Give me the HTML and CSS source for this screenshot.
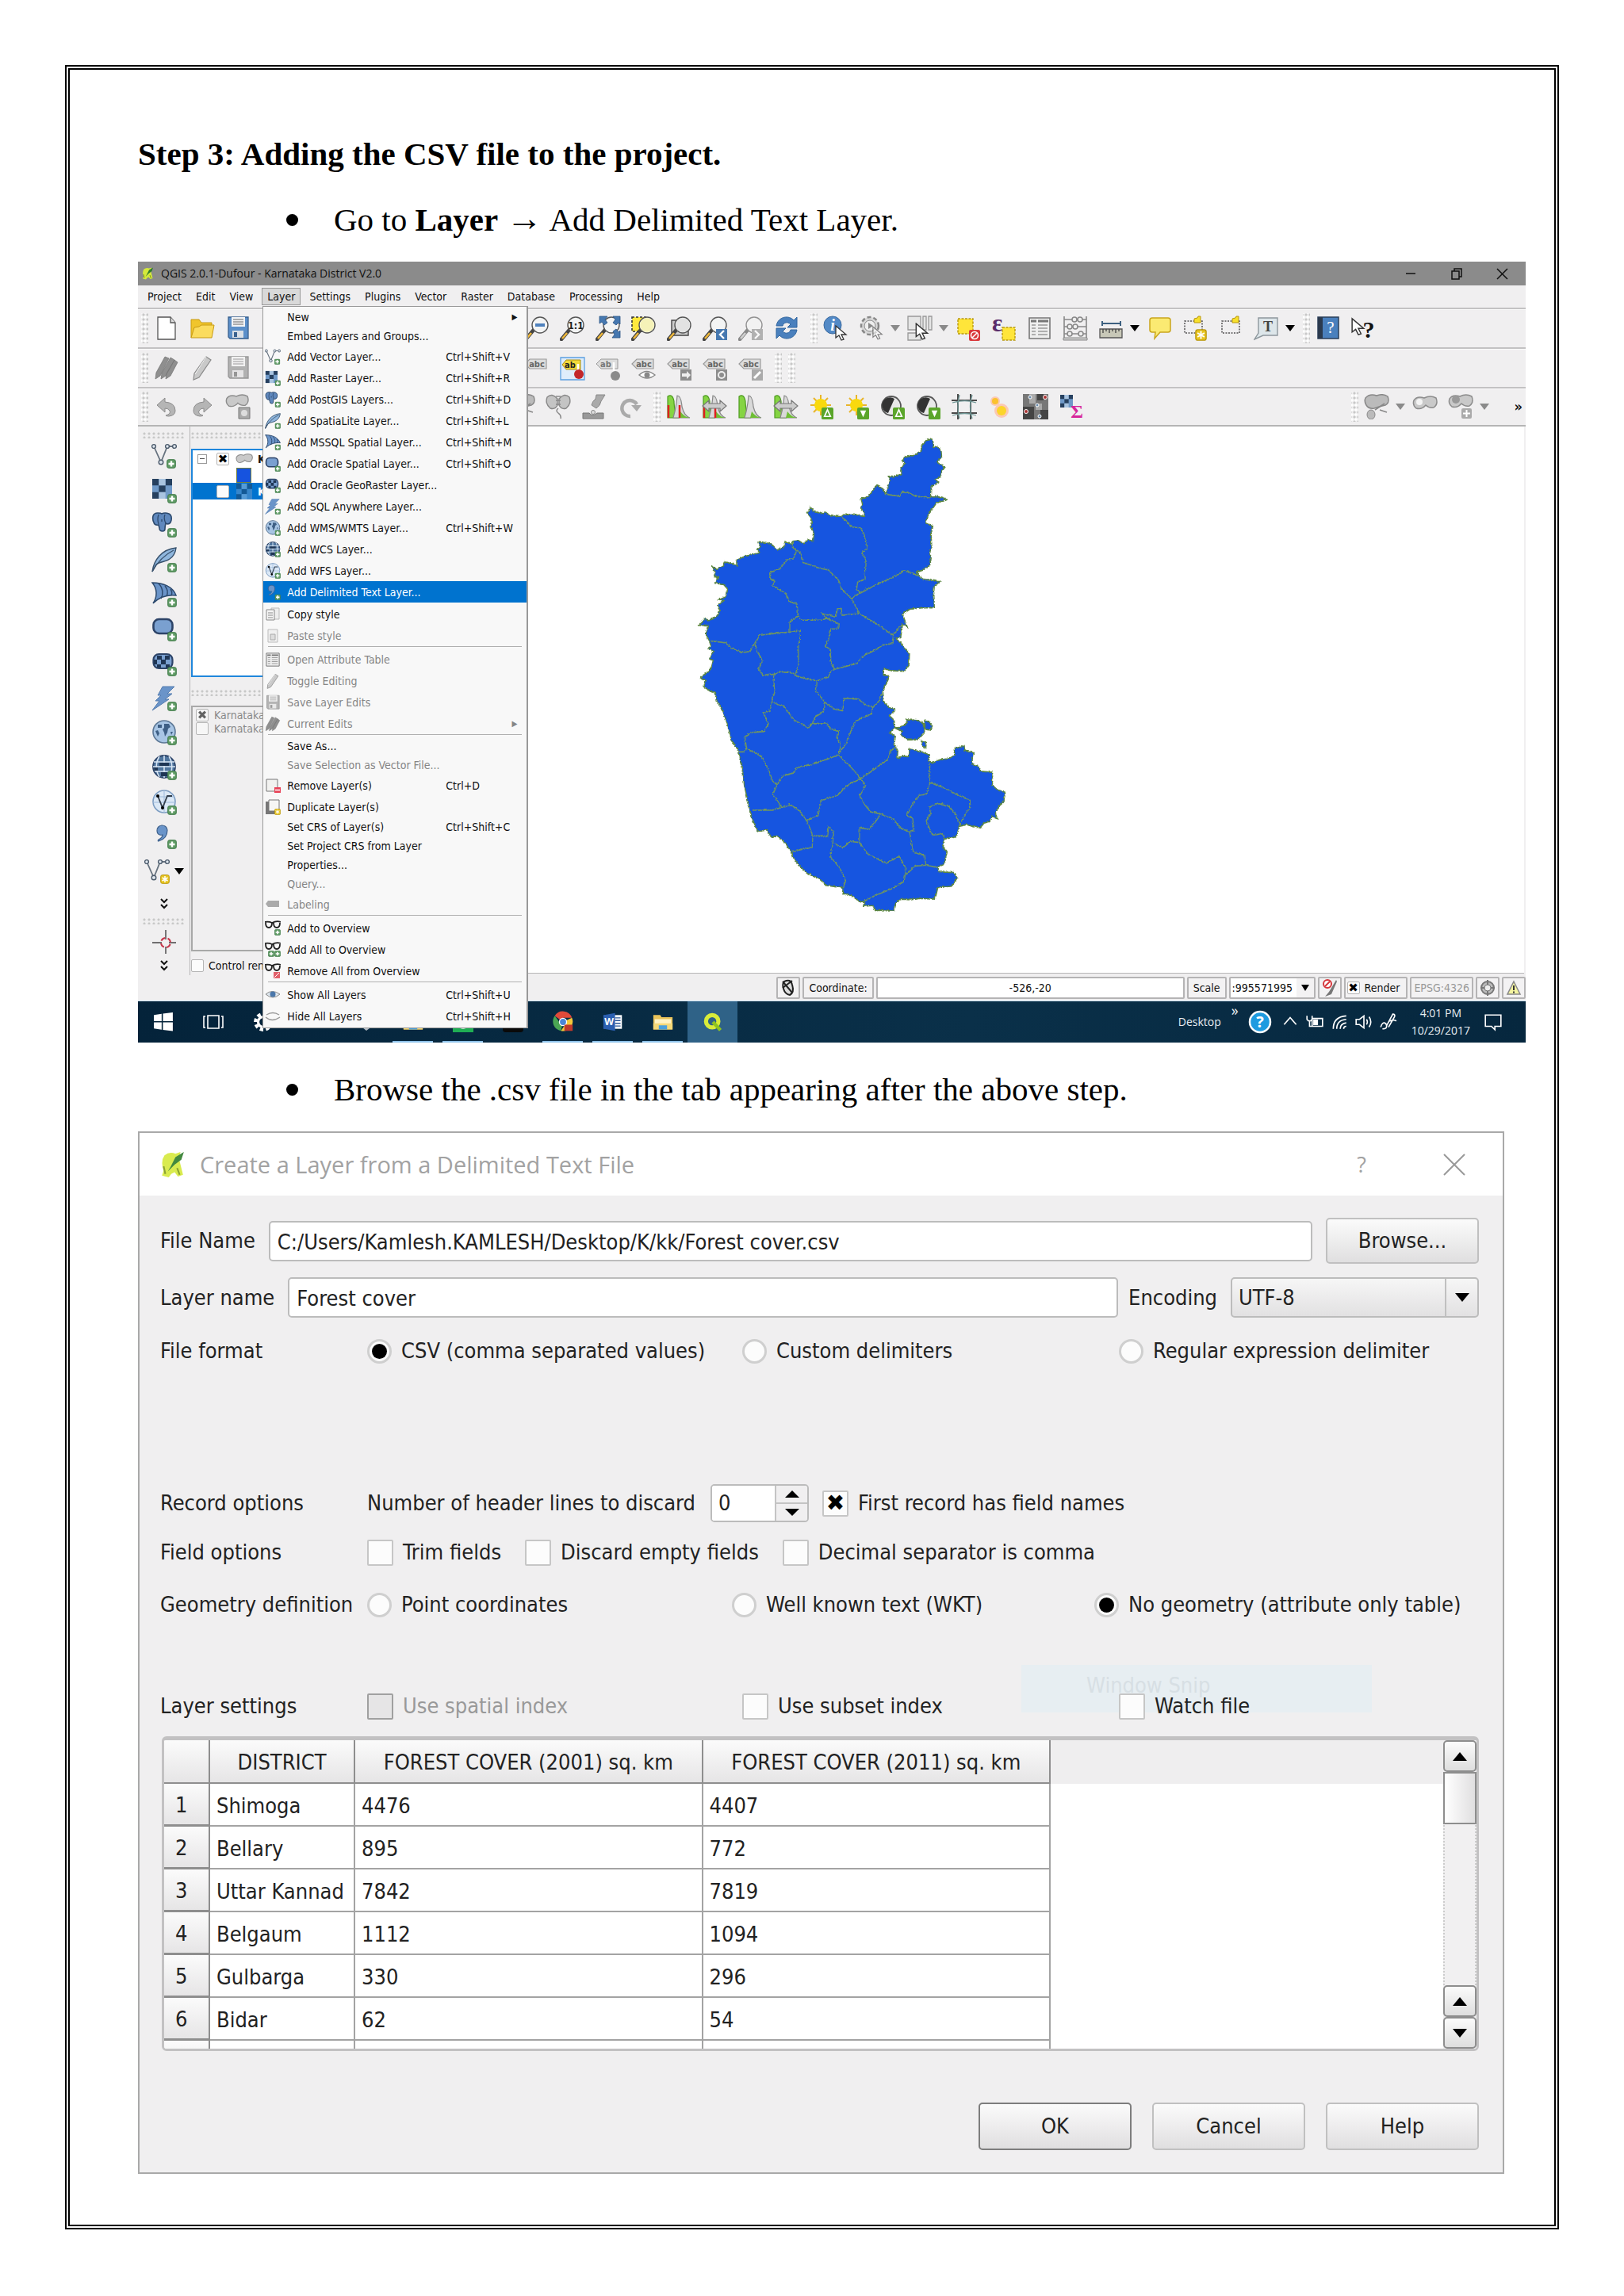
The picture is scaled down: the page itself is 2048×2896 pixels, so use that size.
FILE: index.html
```html
<!DOCTYPE html>
<html lang="en">
<head>
<meta charset="utf-8">
<title>Step 3: Adding the CSV file to the project</title>
<link rel="stylesheet" href="styles.css">
</head>
<body>
<svg class="sprite" aria-hidden="true">
  <defs>
    <symbol id="plus" viewBox="0 0 12 12"><rect x=".7" y=".7" width="10.600" height="10.600" rx="2" fill="#5f9b65" stroke="#3f7a48"/><path d="M6 2.500v7M2.500 6h7" stroke="#fff" stroke-width="2.400"/></symbol>
    <symbol id="star" viewBox="0 0 12 12"><rect x=".7" y=".7" width="10.600" height="10.600" rx="2" fill="#e8c51f" stroke="#b8960c"/><path d="M6 2v8M2.500 4l7 4M9.500 4l-7 4" stroke="#fff" stroke-width="1.500"/></symbol>
    <symbol id="vee" viewBox="0 0 32 32"><path d="M3 4l9 20 8-20h9" fill="none" stroke="#66727f" stroke-width="1.800"/><g fill="#dfe6ee" stroke="#4b5a6b" stroke-width="1.400"><circle cx="3" cy="4" r="2.400"/><circle cx="20" cy="4" r="2.400"/><circle cx="29" cy="4" r="2.400"/><circle cx="12" cy="24" r="2.800"/></g></symbol>
    <symbol id="checker" viewBox="0 0 24 24"><path fill="#6f99c8" d="M0 0h24v24H0z"/><path fill="#26405f" d="M0 0h8v8H0zM16 0h8v8h-8zM8 8h8v8H8zM0 16h8v8H0z"/><path fill="#a9c4e0" d="M8 0h8v8H8zM8 16h8v8H8z"/></symbol>
    <symbol id="l-vector" viewBox="0 0 32 32"><use href="#vee" width="32" height="32"/><use href="#plus" x="19" y="20" width="12" height="12"/></symbol>
    <symbol id="l-newvec" viewBox="0 0 32 32"><use href="#vee" width="32" height="32"/><use href="#star" x="20" y="20" width="12" height="12"/></symbol>
    <symbol id="l-raster" viewBox="0 0 32 32"><use href="#checker" x="1" y="1" width="25" height="25"/><use href="#plus" x="20" y="20" width="12" height="12"/></symbol>
    <symbol id="l-pg" viewBox="0 0 32 32"><path d="M2 5q1-4 6-4 4 0 5 1 4-2 9 0 4 2 3 8-1 5-5 5l-2-1q-1 4-1 7 0 3-3 3-4 0-4-4l-1-4q-5 1-6-3-2-4-1-8z" fill="#5f88bd" stroke="#2d4a6e" stroke-width="1.600"/><path d="M9 3q-2 6 0 12M17 3q-2 5 1 11M13 9v3" fill="none" stroke="#2d4a6e" stroke-width="1.300"/><use href="#plus" x="20" y="20" width="12" height="12"/></symbol>
    <symbol id="l-lite" viewBox="0 0 32 32"><path d="M1 31C3 17 12 3 31 1c-1 8-5 12-8 14-5 4-12 3-17 7z" fill="#8fb6dd" stroke="#37506b" stroke-width="1.400"/><path d="M1 31C8 18 16 10 28 4" fill="none" stroke="#37506b" stroke-width="1.300"/><use href="#plus" x="20" y="20" width="12" height="12"/></symbol>
    <symbol id="l-ms" viewBox="0 0 32 32"><path d="M1 1c14 0 26 5 30 16-9-1-20 1-29 10C8 18 7 8 1 1z" fill="#6a94c9" stroke="#2d4a6e" stroke-width="1.500"/><path d="M9 2c6 6 6 14 3 19M17 5c4 5 4 9 2 13M24 9c2 3 2 6 1 8" fill="none" stroke="#2d4a6e" stroke-width="1.500"/><use href="#plus" x="20" y="20" width="12" height="12"/></symbol>
    <symbol id="l-ora" viewBox="0 0 32 32"><rect x="2.500" y="4" width="24" height="18" rx="7" fill="#7aa0d0" stroke="#2d4468" stroke-width="2.600"/><use href="#plus" x="20" y="20" width="12" height="12"/></symbol>
    <symbol id="l-geo" viewBox="0 0 32 32"><rect x="2.500" y="4" width="24" height="18" rx="7" fill="#7aa0d0" stroke="#2d4468" stroke-width="2.200"/><path fill="#1f3655" d="M7 6h6v5H7zM17 6h6v5h-6zM12 11h6v6h-6zM3 11h4v6H3zM7 17h5v4H7zM18 17h5v4h-5z"/><use href="#plus" x="20" y="20" width="12" height="12"/></symbol>
    <symbol id="l-bolt" viewBox="0 0 32 32"><path d="M14 1h15l-9 9h6l-9 7h5L1 31l9-12H5l7-7H8z" fill="#6a94c9" stroke="#557db0"/><use href="#plus" x="20" y="20" width="12" height="12"/></symbol>
    <symbol id="l-wms" viewBox="0 0 32 32"><circle cx="16" cy="15" r="14" fill="#a8c5e4" stroke="#5d7896" stroke-width="1.600"/><path d="M8 6h5v4H8zM16 5h6l2 4-3 2-1 5-3 5-1-5-2-4 2-2zM5 14l3-1 2 4-2 4zM24 15h3l-2 4z" fill="#3e5f85"/><use href="#plus" x="20" y="20" width="12" height="12"/></symbol>
    <symbol id="l-wcs" viewBox="0 0 32 32"><circle cx="16" cy="15" r="14" fill="#4f759e" stroke="#2d4468" stroke-width="1.800"/><path d="M3 9h26M2 15h28M4 21h24M16 1v28M10 2c-5 8-5 18 0 26M22 2c5 8 5 18 0 26" fill="none" stroke="#d6e4f3" stroke-width="1.600"/><path fill="#1f3655" d="M10 10h12v4H10zM3 16h5v4H4zM12 22h8v5h-8z"/><use href="#plus" x="20" y="20" width="12" height="12"/></symbol>
    <symbol id="l-wfs" viewBox="0 0 32 32"><circle cx="16" cy="15" r="14" fill="#dbe8f6" stroke="#7d9dc2" stroke-width="1.600"/><path d="M3 9h26M2 16h28M16 1v28" stroke="#9fbbdc" fill="none"/><path d="M8 8l6 15 6-15h6" fill="none" stroke="#333f4d" stroke-width="1.800"/><circle cx="8" cy="8" r="2"/><circle cx="14" cy="23" r="2"/><use href="#plus" x="20" y="20" width="12" height="12"/></symbol>
    <symbol id="l-comma" viewBox="0 0 32 32"><path d="M7 9a6.500 6.500 0 1 1 13-1c0 7-4 12-11 14-1 0-1-1 0-2 4-2 5-4 5-6-4 1-7-1-7-5z" fill="#6a94c9" stroke="#3d5f8a" stroke-width="1.200"/><use href="#plus" x="20" y="20" width="12" height="12"/></symbol>
    <symbol id="cross" viewBox="0 0 32 32"><path d="M18 1v12M18 22v9M1 17h12M22 17h9" stroke="#444" stroke-width="1.400"/><circle cx="18" cy="17" r="6" fill="none" stroke="#c8354a" stroke-width="2" stroke-dasharray="6 3.400" stroke-dashoffset="-2"/></symbol>

    <symbol id="t-new" viewBox="0 0 32 32"><path d="M5 2h16l6 7v21H5z" fill="#fff" stroke="#555" stroke-width="1.300"/><path d="M21 2v7h6" fill="#ddd" stroke="#555" stroke-width="1.300"/></symbol>
    <symbol id="t-open" viewBox="0 0 32 32"><path d="M2 28V5h10l3 4h13v5" fill="#f0c52c" stroke="#c79a12"/><path d="M2 28L6 15l6-1 3-2h16l-3 16z" fill="#fbdc5e" stroke="#c79a12"/></symbol>
    <symbol id="t-save" viewBox="0 0 32 32"><path d="M4 2h25v27H6l-2-2z" fill="#5b8fc9" stroke="#39618f" stroke-width="1.300"/><path d="M8 2h17v12H8z" fill="#f1f3f5"/><path d="M10 5h13M10 8h13M10 11h13" stroke="#666" stroke-width="1.200"/><path d="M9 19h14v9H9z" fill="#d9dfe6"/><path d="M11 21h4v6h-4z" fill="#39618f"/></symbol>
    <symbol id="t-pencils" viewBox="0 0 32 32"><path d="M14 2l5 2L8 26l-6 4 1-8zM21 3l5 3-11 20-6 4 1-7zM26 6l4 3-9 17-6 4 1-7z" fill="#8f8f8f" stroke="#777" stroke-width=".8"/></symbol>
    <symbol id="t-pencil" viewBox="0 0 32 32"><path d="M21 2l6 4-15 22-7 3 1-8z" fill="#c9c9c9" stroke="#8b8b8b" stroke-width="1.200"/><path d="M21 2L7 24" stroke="#f5f5f5"/></symbol>
    <symbol id="t-mag" viewBox="0 0 32 32"><path d="M2 30l10-12" stroke="#444" stroke-width="4.500" stroke-linecap="round"/><path d="M3 29l6-7" stroke="#f0b93a" stroke-width="2.500"/><circle cx="20" cy="12" r="10" fill="#f3f4f4" stroke="#555" stroke-width="1.400"/></symbol>
    <symbol id="t-out" viewBox="0 0 32 32"><use href="#t-mag" width="32" height="32"/><path d="M14 10h12v4H14z" fill="#4f81bd"/></symbol>
    <symbol id="t-one" viewBox="0 0 32 32"><use href="#t-mag" width="32" height="32"/><text x="20" y="17" font-size="12" font-weight="700" text-anchor="middle" fill="#222">1:1</text></symbol>
    <symbol id="t-full" viewBox="0 0 32 32"><use href="#t-mag" width="32" height="32"/><path d="M5 1h10l-3 4 3 4-4 3-3-4-3 2zM31 1H22l3 4-3 4 4 3 3-3 2 2zM31 28H21l3-4-2-4 4-3 3 4 2-2z" fill="#4678b0" stroke="#2c5585" stroke-width=".8"/></symbol>
    <symbol id="t-sel" viewBox="0 0 32 32"><path d="M1 2h18v18H1z" fill="#ffe93e" stroke="#333" stroke-width="1.600" stroke-dasharray="3 2"/><use href="#t-mag" width="32" height="32"/><circle cx="20" cy="12" r="9" fill="#f5f2b8"/></symbol>
    <symbol id="t-lay" viewBox="0 0 32 32"><path d="M6 6h21v19H6z" fill="#ccc" stroke="#444" stroke-width="1.400"/><use href="#t-mag" width="32" height="32"/><circle cx="20" cy="12" r="9" fill="#e2e2e2"/></symbol>
    <symbol id="t-last" viewBox="0 0 32 32"><use href="#t-mag" width="32" height="32"/><path d="M17 17h14v14H17z" fill="#4678b0"/><path d="M27 19l-5 5 5 5" fill="none" stroke="#fff" stroke-width="2.400"/></symbol>
    <symbol id="t-next" viewBox="0 0 32 32"><use href="#t-mag" width="32" height="32"/><path d="M17 17h14v14H17z" fill="#888"/><path d="M21 19l5 5-5 5" fill="none" stroke="#fff" stroke-width="2.400"/></symbol>
    <symbol id="t-ref" viewBox="0 0 32 32"><path d="M3 13C5 1 19-1 25 6l4-4v13H17l4-4c-4-4-9-2-10 2zM29 18c-2 12-16 14-22 7l-4 4V16h12l-4 4c4 4 9 2 10-2z" fill="#4a80bd" stroke="#2f659f"/></symbol>
    <symbol id="arrow" viewBox="0 0 16 20"><path d="M1 1v15l4-3 3 6 3-1-3-6h6z" fill="#fff" stroke="#333" stroke-width="1.300"/></symbol>
    <symbol id="t-info" viewBox="0 0 32 32"><circle cx="12" cy="12" r="11" fill="#5289c6" stroke="#3b6a9f"/><text x="12" y="19" font-family="Liberation Serif" font-style="italic" font-weight="700" font-size="20" text-anchor="middle" fill="#fff">i</text><use href="#arrow" x="15" y="12" width="16" height="20"/></symbol>
    <symbol id="t-gear" viewBox="0 0 32 32"><circle cx="14" cy="13" r="11" fill="#d8d8d8" stroke="#888" stroke-width="2.500" stroke-dasharray="5 3"/><circle cx="14" cy="13" r="7" fill="#eee" stroke="#888"/><path d="M12 9l6 4-6 4z" fill="#888"/><use href="#arrow" x="17" y="13" width="14" height="18" opacity=".6"/></symbol>
    <symbol id="t-pick" viewBox="0 0 32 32"><path d="M1 1h16v17H1zM20 1h4v17h-4zM27 1h4v17h-4zM1 22h16v9H1z" fill="#e6e6e6" stroke="#999" stroke-width="1.300"/><use href="#arrow" x="10" y="9" width="18" height="22"/></symbol>
    <symbol id="t-desel" viewBox="0 0 32 32"><path d="M3 4h19v19H3z" fill="#ffe53a" stroke="#b89a10" stroke-width="1.400" stroke-dasharray="3 1.500"/><rect x="17" y="18" width="14" height="14" rx="2" fill="#d9393c"/><circle cx="24" cy="25" r="4.500" fill="none" stroke="#fff" stroke-width="1.600"/><path d="M21 28l6-6" stroke="#fff" stroke-width="1.600"/></symbol>
    <symbol id="t-eps" viewBox="0 0 32 32"><text x="1" y="20" font-family="Liberation Serif" font-size="31" font-weight="700" fill="#5b2d6b">ε</text><path d="M14 15h16v16H14z" fill="#ffe53a" stroke="#b89a10" stroke-width="1.400" stroke-dasharray="3 1.500"/></symbol>
    <symbol id="t-table" viewBox="0 0 32 32"><path d="M3 3h26v26H3z" fill="#eee" stroke="#777" stroke-width="1.600"/><path d="M5 7h7M14 7h13" stroke="#777" stroke-width="3"/><path d="M6 12h5M14 12h12M6 16h5M14 16h12M6 20h5M14 20h12M6 24h5M14 24h12" stroke="#999" stroke-width="1.500"/></symbol>
    <symbol id="t-abac" viewBox="0 0 32 32"><path d="M2 1v27M30 1v27M2 5h28M2 14h28M2 23h28" stroke="#888" stroke-width="1.600"/><path d="M1 28h30v3H1z" fill="#ccc" stroke="#888"/><g fill="#eee" stroke="#888" stroke-width="1.500"><circle cx="15" cy="5" r="3"/><circle cx="22" cy="5" r="3"/><circle cx="9" cy="14" r="3"/><circle cx="16" cy="14" r="3"/><circle cx="9" cy="23" r="3"/><circle cx="23" cy="23" r="3"/></g></symbol>
    <symbol id="t-meas" viewBox="0 0 32 32"><path d="M5 7v6M28 7v6M5 10h23" stroke="#3c6080" stroke-width="2"/><path d="M2 17h28v11H2z" fill="#c8c8b8" stroke="#555" stroke-width="1.300"/><path d="M6 17v5M10 17v3M14 17v5M18 17v3M22 17v5M26 17v3" stroke="#444" stroke-width="1.300"/></symbol>
    <symbol id="t-tip" viewBox="0 0 32 32"><path d="M7 3h20q3 0 3 3v12q0 3-3 3H17l-7 8 1-8H7q-3 0-3-3V6q0-3 3-3z" fill="#fbea72" stroke="#c9a51c" stroke-width="1.500"/></symbol>
    <symbol id="t-bmnew" viewBox="0 0 32 32"><path d="M3 7h22v15H3z" fill="none" stroke="#555" stroke-width="1.500" stroke-dasharray="2 1.500"/><path d="M15 4l4-1 1-2h3v8h-8z" fill="#f7e02c" stroke="#b8960c"/><use href="#star" x="16" y="17" width="15" height="15"/></symbol>
    <symbol id="t-bm" viewBox="0 0 32 32"><path d="M5 7h22v15H5z" fill="none" stroke="#555" stroke-width="1.500" stroke-dasharray="2 1.500"/><path d="M18 4l4-1 1-2h3v8h-8z" fill="#f7e02c" stroke="#b8960c"/></symbol>
    <symbol id="t-anno" viewBox="0 0 32 32"><path d="M6 3h24v22H12L1 30l5-8z" fill="#dde6ea" stroke="#8d979c" stroke-width="1.400"/><text x="18" y="20" font-family="Liberation Serif" font-weight="700" font-size="18" text-anchor="middle" fill="#444">T</text></symbol>
    <symbol id="t-book" viewBox="0 0 32 32"><path d="M3 2h26v27H3z" fill="#4a80bd" stroke="#2a3f59" stroke-width="1.500"/><path d="M3 2h6v27H3z" fill="#2b3a4e"/><text x="19" y="22" font-family="Liberation Serif" font-size="21" text-anchor="middle" fill="#fff">?</text></symbol>
    <symbol id="t-what" viewBox="0 0 32 32"><use href="#arrow" x="0" y="2" width="18" height="24"/><text x="22" y="28" font-family="Liberation Serif" font-weight="700" font-size="30" text-anchor="middle" fill="#111">?</text></symbol>
    <symbol id="tag" viewBox="0 0 32 32"><path d="M7 5h21v12H7L1 11z" fill="#ddd" stroke="#999" stroke-width="1.200"/><text x="16" y="15" font-size="11" font-weight="700" text-anchor="middle" fill="#666">abc</text></symbol>
    <symbol id="t-abc" viewBox="0 0 32 32"><use href="#tag" width="32" height="32"/></symbol>
    <symbol id="t-abred" viewBox="0 0 32 32"><path d="M1 3h30v28H1z" fill="#dfedfb" stroke="#5b9fe0" stroke-width="1.300"/><path d="M8 6h18v12H8l-5-6z" fill="#f2d93a" stroke="#a98d12"/><text x="13" y="16" font-size="11" font-weight="700" text-anchor="middle" fill="#222">ab</text><path d="M23 11v10" stroke="#fff" stroke-width="2.500"/><circle cx="24" cy="24" r="6" fill="#c3272b"/></symbol>
    <symbol id="t-abpin" viewBox="0 0 32 32"><path d="M7 5h21v12H7L1 11z" fill="#ddd" stroke="#999"/><text x="13" y="15" font-size="11" font-weight="700" text-anchor="middle" fill="#777">ab</text><path d="M23 9v12" stroke="#fff" stroke-width="2.500"/><circle cx="25" cy="26" r="6" fill="#8a8a8a"/></symbol>
    <symbol id="t-abeye" viewBox="0 0 32 32"><use href="#tag" width="32" height="32"/><path d="M10 25q9-9 20 0-10 8-20 0z" fill="#fff" stroke="#888" stroke-width="1.400"/><circle cx="20" cy="25" r="3.500" fill="#888"/></symbol>
    <symbol id="t-abmov" viewBox="0 0 32 32"><use href="#tag" width="32" height="32"/><path d="M17 18h14v14H17z" fill="#8d8d8d"/><path d="M19 23h6v-3l5 5-5 5v-3h-6z" fill="#eee"/></symbol>
    <symbol id="t-abrot" viewBox="0 0 32 32"><use href="#tag" width="32" height="32"/><path d="M17 18h14v14H17z" fill="#8d8d8d"/><circle cx="24" cy="25" r="4" fill="none" stroke="#eee" stroke-width="2"/></symbol>
    <symbol id="t-abed" viewBox="0 0 32 32"><use href="#tag" width="32" height="32"/><path d="M17 18h14v14H17z" fill="#aaa"/><path d="M20 29l8-8" stroke="#fff" stroke-width="3"/></symbol>
    <symbol id="t-undo" viewBox="0 0 32 32"><path d="M4 14l10-9v5q13 1 13 11 0 6-8 7-3 0-4-1 7-2 5-6-2-3-6-3v5z" fill="#b5b5b5" stroke="#8c8c8c"/></symbol>
    <symbol id="t-redo" viewBox="0 0 32 32"><path d="M28 14L18 5v5Q5 11 5 21q0 6 8 7 3 0 4-1-7-2-5-6 2-3 6-3v5z" fill="#b5b5b5" stroke="#8c8c8c"/></symbol>
    <symbol id="blob" viewBox="0 0 32 20"><path d="M2 6q4-6 13-3 8-4 15 0 3 8-3 12-6 1-10-3-5 6-12 4-5-4-3-10z" fill="#c9c9c9" stroke="#8c8c8c" stroke-width="1.500"/></symbol>
    <symbol id="t-merge" viewBox="0 0 32 32"><use href="#blob" y="0" width="30" height="19"/><path d="M17 17h14v14H17z" fill="#aaa" stroke="#777"/><circle cx="24" cy="24" r="4" fill="#ddd"/></symbol>
    <symbol id="t-bfly" viewBox="0 0 32 32"><path d="M15 6Q8-2 2 4q-3 8 4 14 6 2 9-4zM17 6q7-8 13-2 3 8-4 14-6 2-9-4z" fill="#c4c4c4" stroke="#888" stroke-width="1.400"/><path d="M13 3h6M13 8h6M13 13h6M16 18q-4 3 0 6t3 7" fill="none" stroke="#888" stroke-width="1.500"/></symbol>
    <symbol id="t-fill" viewBox="0 0 32 32"><path d="M19 1h11l-5 8q-1 6-6 9l-6-4q1-5 5-8z" fill="#aaa" stroke="#888"/><path d="M2 24h8q4 5 10 0h8v7H2z" fill="#999" stroke="#777"/><circle cx="15" cy="23" r="2.500" fill="#ddd" stroke="#888"/></symbol>
    <symbol id="t-rot" viewBox="0 0 32 32"><path d="M17 28A10 10 0 1 1 25 13" fill="none" stroke="#aaa" stroke-width="4.500"/><path d="M18 14h13l-6 8z" fill="#aaa"/></symbol>
    <symbol id="hist" viewBox="0 0 32 32"><path d="M2 30V3q6-4 8 6 0 14 6 21z" fill="#85d443" stroke="#4d9a20" stroke-width="1.200"/><path d="M9 30q4-14 5-28 5 0 6 14 3 12 10 14z" fill="#d9d9d9" stroke="#888" stroke-width="1.200"/><path d="M18 22q5 7 12 8H16z" fill="#6fbf35"/></symbol>
    <symbol id="t-h1" viewBox="0 0 32 32"><use href="#hist" width="32" height="32"/><path d="M3 14v16M17 14v16" stroke="#e02020" stroke-width="2.500"/></symbol>
    <symbol id="dbl" viewBox="0 0 32 16"><path d="M1 8l8-7v4h14V1l8 7-8 7v-4H9v4z" fill="#ccc" stroke="#777" stroke-width="1.200"/></symbol>
    <symbol id="t-h2" viewBox="0 0 32 32"><use href="#t-h1" width="32" height="32"/><use href="#dbl" y="7" width="32" height="16"/></symbol>
    <symbol id="t-h4" viewBox="0 0 32 32"><use href="#hist" width="32" height="32"/><use href="#dbl" y="7" width="32" height="16"/></symbol>
    <symbol id="g-up" viewBox="0 0 16 16"><rect width="16" height="16" rx="2" fill="#5aa52a"/><path d="M8 3l4 9H4z" fill="none" stroke="#fff" stroke-width="1.800"/></symbol>
    <symbol id="g-dn" viewBox="0 0 16 16"><rect width="16" height="16" rx="2" fill="#5aa52a"/><path d="M8 13l4-9H4z" fill="#fff"/></symbol>
    <symbol id="sun" viewBox="0 0 32 32"><path d="M15 1v26M2 14h26M6 5l18 18M24 5L6 23" stroke="#e9b52a" stroke-width="2"/><circle cx="15" cy="14" r="8" fill="#f9d90e"/></symbol>
    <symbol id="t-s1" viewBox="0 0 32 32"><use href="#sun" width="32" height="32"/><use href="#g-up" x="16" y="17" width="15" height="15"/></symbol>
    <symbol id="t-s2" viewBox="0 0 32 32"><use href="#sun" width="32" height="32"/><use href="#g-dn" x="16" y="17" width="15" height="15"/></symbol>
    <symbol id="moon" viewBox="0 0 32 32"><circle cx="14" cy="15" r="12" fill="#e8e8e8" stroke="#555" stroke-width="1.800"/><path d="M18 6A10 10 0 1 0 10 24z" fill="#333"/></symbol>
    <symbol id="t-m1" viewBox="0 0 32 32"><use href="#moon" width="32" height="32"/><use href="#g-up" x="16" y="17" width="15" height="15"/></symbol>
    <symbol id="t-m2" viewBox="0 0 32 32"><use href="#moon" width="32" height="32"/><use href="#g-dn" x="16" y="17" width="15" height="15"/></symbol>
    <symbol id="t-grid" viewBox="0 0 32 32"><path d="M8 0v32M24 0v32M0 8h32M0 24h32" stroke="#4a4a4a" stroke-width="2"/><path d="M10 1q-4 16 0 30M26 1q-5 16 0 30M1 11q16-5 30 0M1 27q16-5 30 0" fill="none" stroke="#6f9796" stroke-width="1.300"/></symbol>
    <symbol id="t-spots" viewBox="0 0 32 32"><circle cx="10" cy="9" r="6" fill="#fbc9b4"/><circle cx="10" cy="9" r="4" fill="#fbc22f"/><circle cx="18" cy="21" r="9" fill="#fbc9b4"/><circle cx="18" cy="21" r="6" fill="#fcd52a"/></symbol>
    <symbol id="t-dark" viewBox="0 0 32 32"><path fill="#777" d="M0 0h32v32H0z"/><path fill="#444" d="M0 16h14v16H0zM22 20h10v12H22zM18 0h8v8h-8z"/><path fill="#aaa" d="M8 0h8v12H8zM16 12h8v8h-8z"/><g stroke="#fff" fill="#a33"><circle cx="28" cy="4" r="2.500"/><circle cx="4" cy="22" r="2.500"/></g><g stroke="#fff" fill="#68a"><circle cx="9" cy="4" r="2"/><circle cx="18" cy="14" r="2"/><circle cx="21" cy="28" r="2"/></g></symbol>
    <symbol id="t-sigma" viewBox="0 0 32 32"><use href="#checker" x="2" y="1" width="16" height="16"/><text x="23" y="30" font-family="Liberation Serif" font-weight="700" font-size="24" text-anchor="middle" fill="#d6279b">Σ</text></symbol>
    <symbol id="t-b1" viewBox="0 0 32 32"><path d="M2 5q5-6 14-3 8-3 14 1 3 8-3 11l-8 2-6 2q-7 1-10-4-3-5-1-9z" fill="#bbb" stroke="#888" stroke-width="1.500"/><ellipse cx="9" cy="26" rx="5" ry="6" fill="#bbb" stroke="#888"/><path d="M14 20l12-8M20 20l9 3" stroke="#888" stroke-width="1.600"/></symbol>
    <symbol id="t-b2" viewBox="0 0 32 32"><use href="#blob" y="2" width="32" height="20"/><circle cx="9" cy="10" r="4" fill="#f4f4f4"/></symbol>
    <symbol id="t-b3" viewBox="0 0 32 32"><use href="#blob" y="0" width="32" height="20"/><circle cx="10" cy="7" r="5" fill="#999"/><rect x="17" y="18" width="13" height="13" rx="2" fill="#aaa"/><path d="M23.500 20v9M19 24.500h9" stroke="#fff" stroke-width="2"/></symbol>

    <symbol id="m-copy" viewBox="0 0 20 20"><path d="M8 2h10v14H8z" fill="#eee" stroke="#bbb"/><path d="M2 4h10v13H2z" fill="#f6f6f6" stroke="#888"/><path d="M4 8h6M4 11h6M4 14h6" stroke="#888"/></symbol>
    <symbol id="m-paste" viewBox="0 0 20 20"><path d="M4 2h12v16H4z" fill="#f0f0f0" stroke="#bbb"/><path d="M7 8h6v7H7z" fill="#ddd" stroke="#aaa"/></symbol>
    <symbol id="m-rem" viewBox="0 0 20 20"><path d="M2 2h14v15H2z" fill="#f2f2f0" stroke="#777"/><path d="M12 12h8v7h-8z" fill="#e84257"/><path d="M13 15.500h6" stroke="#fff" stroke-width="1.500"/></symbol>
    <symbol id="m-dup" viewBox="0 0 20 20"><path d="M1 3h14v16H1z" fill="#777"/><path d="M5 1h13v14H5z" fill="#f6f6f4" stroke="#777"/><use href="#star" x="12" y="12" width="8" height="8"/></symbol>
    <symbol id="m-lab" viewBox="0 0 20 20"><path d="M4 5h14v8H4L1 9z" fill="#aaa"/></symbol>
    <symbol id="specs" viewBox="0 0 20 20"><path d="M0 2q5-1 9 1 6-3 11-1M1 3q0 6 4 6t4-6M11 3q0 6 4 6t4-6" fill="none" stroke="#222" stroke-width="1.800"/></symbol>
    <symbol id="m-ov1" viewBox="0 0 20 20"><use href="#specs" width="20" height="20"/><use href="#plus" x="12" y="11" width="8" height="8"/></symbol>
    <symbol id="m-ov2" viewBox="0 0 20 20"><use href="#specs" width="20" height="20"/><use href="#plus" x="4" y="11" width="8" height="8"/><use href="#plus" x="12" y="11" width="8" height="8"/></symbol>
    <symbol id="m-ov3" viewBox="0 0 20 20"><use href="#specs" width="20" height="20"/><rect x="11" y="11" width="8" height="8" fill="#e2606b"/><path d="M12 18l6-6" stroke="#fff"/></symbol>
    <symbol id="m-eye" viewBox="0 0 20 20"><path d="M1 9q8-7 18 0-9 8-18 0z" fill="#dfe7ee" stroke="#888"/><circle cx="10" cy="9" r="3.500" fill="#4b78ab"/></symbol>
    <symbol id="m-hide" viewBox="0 0 20 20"><path d="M1 11q8 7 18 0M2 8q8-5 16 0" fill="none" stroke="#999" stroke-width="1.300"/></symbol>
    <symbol id="qgis" viewBox="0 0 32 32"><path d="M7 5q6-5 13-2l6-2-2 7 5 20-6 2-4-5-4 2-3 4-8-2 2-6Q2 12 7 5z" fill="#d5e93c"/><path d="M30 1L20 7l-6 12-3 5 8-8 8-6z" fill="#2f7d2b"/><path d="M6 18l2 9M22 20l3 8" stroke="#7f9a1c" stroke-width="2"/></symbol>
    <symbol id="folder" viewBox="0 0 30 26"><path d="M1 3h10l2 3h16v18H1z" fill="#e9c35a"/><path d="M3 9h24v12H3z" fill="#fff3c4"/><path d="M1 15h28v9H1z" fill="#f6d978"/><path d="M9 18h12v6H9z" fill="#4ba0dc"/></symbol>
  </defs>
</svg>

<main class="sheet">
  <h1 class="doc-text">Step 3: Adding the CSV file to the project.</h1>
  <ul class="doc-text steps"><li><span>Go to <b>Layer</b> <span class="to">→</span> Add Delimited Text Layer.</span></li></ul>

  <section class="qgis" aria-label="QGIS">
    <header class="titlebar">
      <svg class="logo"><use href="#qgis"/></svg>
      <span class="title">QGIS 2.0.1-Dufour - Karnataka District V2.0</span>
      <button aria-label="Minimize"><svg viewBox="0 0 16 16"><path d="M2 8h12"/></svg></button>
      <button aria-label="Restore"><svg viewBox="0 0 16 16"><path d="M2 5h9v10H2zM5 5V2h9v10h-3"/></svg></button>
      <button aria-label="Close"><svg viewBox="0 0 16 16"><path d="M1 2l13 13M14 2L1 15"/></svg></button>
    </header>
    <nav class="menubar">
      <button>Project</button><button>Edit</button><button>View</button>
      <div class="menu-host"><button class="open" aria-expanded="true">Layer</button>
        <div class="menu" role="menu">
          <button class="short"><span>New</span><kbd class="sub">▶</kbd></button>
          <button class="short"><span>Embed Layers and Groups...</span></button>
          <button><svg><use href="#l-vector"/></svg><span>Add Vector Layer...</span><kbd>Ctrl+Shift+V</kbd></button>
          <button><svg><use href="#l-raster"/></svg><span>Add Raster Layer...</span><kbd>Ctrl+Shift+R</kbd></button>
          <button><svg><use href="#l-pg"/></svg><span>Add PostGIS Layers...</span><kbd>Ctrl+Shift+D</kbd></button>
          <button><svg><use href="#l-lite"/></svg><span>Add SpatiaLite Layer...</span><kbd>Ctrl+Shift+L</kbd></button>
          <button><svg><use href="#l-ms"/></svg><span>Add MSSQL Spatial Layer...</span><kbd>Ctrl+Shift+M</kbd></button>
          <button><svg><use href="#l-ora"/></svg><span>Add Oracle Spatial Layer...</span><kbd>Ctrl+Shift+O</kbd></button>
          <button><svg><use href="#l-geo"/></svg><span>Add Oracle GeoRaster Layer...</span></button>
          <button><svg><use href="#l-bolt"/></svg><span>Add SQL Anywhere Layer...</span></button>
          <button><svg><use href="#l-wms"/></svg><span>Add WMS/WMTS Layer...</span><kbd>Ctrl+Shift+W</kbd></button>
          <button><svg><use href="#l-wcs"/></svg><span>Add WCS Layer...</span></button>
          <button><svg><use href="#l-wfs"/></svg><span>Add WFS Layer...</span></button>
          <button class="active"><svg><use href="#l-comma"/></svg><span>Add Delimited Text Layer...</span></button>
          <button class="spaced"><svg><use href="#m-copy"/></svg><span>Copy style</span></button>
          <button disabled><svg><use href="#m-paste"/></svg><span>Paste style</span></button>
          <hr>
          <button disabled><svg><use href="#t-table"/></svg><span>Open Attribute Table</span></button>
          <button disabled><svg><use href="#t-pencil"/></svg><span>Toggle Editing</span></button>
          <button disabled><svg class="off"><use href="#t-save"/></svg><span>Save Layer Edits</span></button>
          <button disabled><svg><use href="#t-pencils"/></svg><span>Current Edits</span><kbd class="sub">▶</kbd></button>
          <hr>
          <button class="short"><span>Save As...</span></button>
          <button class="short" disabled><span>Save Selection as Vector File...</span></button>
          <button><svg><use href="#m-rem"/></svg><span>Remove Layer(s)</span><kbd>Ctrl+D</kbd></button>
          <button><svg><use href="#m-dup"/></svg><span>Duplicate Layer(s)</span></button>
          <button class="short"><span>Set CRS of Layer(s)</span><kbd>Ctrl+Shift+C</kbd></button>
          <button class="short"><span>Set Project CRS from Layer</span></button>
          <button class="short"><span>Properties...</span></button>
          <button class="short" disabled><span>Query...</span></button>
          <button disabled><svg><use href="#m-lab"/></svg><span>Labeling</span></button>
          <hr>
          <button><svg><use href="#m-ov1"/></svg><span>Add to Overview</span></button>
          <button><svg><use href="#m-ov2"/></svg><span>Add All to Overview</span></button>
          <button><svg><use href="#m-ov3"/></svg><span>Remove All from Overview</span></button>
          <hr>
          <button><svg><use href="#m-eye"/></svg><span>Show All Layers</span><kbd>Ctrl+Shift+U</kbd></button>
          <button><svg><use href="#m-hide"/></svg><span>Hide All Layers</span><kbd>Ctrl+Shift+H</kbd></button>
        </div>
      </div>
      <button>Settings</button><button>Plugins</button><button>Vector</button><button>Raster</button><button>Database</button><button>Processing</button><button>Help</button>
    </nav>

    <div class="toolbar">
      <i class="grip first"></i>
      <button aria-label="New"><svg><use href="#t-new"/></svg></button>
      <button aria-label="Open"><svg><use href="#t-open"/></svg></button>
      <button aria-label="Save"><svg><use href="#t-save"/></svg></button>
      <span class="covered wide"></span>
      <button aria-label="Zoom out"><svg><use href="#t-out"/></svg></button>
      <button aria-label="Zoom to native"><svg><use href="#t-one"/></svg></button>
      <button aria-label="Zoom full"><svg><use href="#t-full"/></svg></button>
      <button aria-label="Zoom to selection"><svg><use href="#t-sel"/></svg></button>
      <button aria-label="Zoom to layer"><svg><use href="#t-lay"/></svg></button>
      <button aria-label="Zoom last"><svg><use href="#t-last"/></svg></button>
      <button aria-label="Zoom next"><svg class="off"><use href="#t-next"/></svg></button>
      <button aria-label="Refresh"><svg><use href="#t-ref"/></svg></button>
      <i class="grip"></i>
      <button aria-label="Identify"><svg><use href="#t-info"/></svg></button>
      <button aria-label="Run action"><svg><use href="#t-gear"/></svg></button><i class="caret dim"></i>
      <button aria-label="Select"><svg><use href="#t-pick"/></svg></button><i class="caret dim"></i>
      <button aria-label="Deselect"><svg><use href="#t-desel"/></svg></button>
      <button aria-label="Select by expression"><svg><use href="#t-eps"/></svg></button>
      <button aria-label="Attribute table"><svg><use href="#t-table"/></svg></button>
      <button aria-label="Field calculator"><svg><use href="#t-abac"/></svg></button>
      <button aria-label="Measure"><svg><use href="#t-meas"/></svg></button><i class="caret"></i>
      <button aria-label="Map tips"><svg><use href="#t-tip"/></svg></button>
      <button aria-label="New bookmark"><svg><use href="#t-bmnew"/></svg></button>
      <button aria-label="Show bookmarks"><svg><use href="#t-bm"/></svg></button>
      <button aria-label="Text annotation"><svg><use href="#t-anno"/></svg></button><i class="caret"></i>
      <i class="grip"></i>
      <button aria-label="Help contents"><svg><use href="#t-book"/></svg></button>
      <button aria-label="What's this"><svg><use href="#t-what"/></svg></button>
    </div>
    <div class="toolbar">
      <i class="grip first"></i>
      <button aria-label="Current edits"><svg><use href="#t-pencils"/></svg></button>
      <button aria-label="Toggle editing"><svg><use href="#t-pencil"/></svg></button>
      <button aria-label="Save edits"><svg class="off"><use href="#t-save"/></svg></button>
      <span class="covered wide"></span>
      <button aria-label="Labeling"><svg><use href="#t-abc"/></svg></button>
      <button aria-label="Highlight pinned"><svg><use href="#t-abred"/></svg></button>
      <button aria-label="Pin labels"><svg><use href="#t-abpin"/></svg></button>
      <button aria-label="Show labels"><svg><use href="#t-abeye"/></svg></button>
      <button aria-label="Move label"><svg><use href="#t-abmov"/></svg></button>
      <button aria-label="Rotate label"><svg><use href="#t-abrot"/></svg></button>
      <button aria-label="Change label"><svg><use href="#t-abed"/></svg></button>
      <i class="grip"></i><i class="grip"></i>
    </div>
    <div class="toolbar">
      <i class="grip first"></i>
      <button aria-label="Undo"><svg><use href="#t-undo"/></svg></button>
      <button aria-label="Redo"><svg><use href="#t-redo"/></svg></button>
      <button aria-label="Simplify"><svg><use href="#t-merge"/></svg></button>
      <span class="covered"></span>
      <button aria-label="Merge"><svg><use href="#t-b1"/></svg></button>
      <button aria-label="Offset"><svg><use href="#t-bfly"/></svg></button>
      <button aria-label="Fill"><svg><use href="#t-fill"/></svg></button>
      <button aria-label="Rotate"><svg><use href="#t-rot"/></svg></button>
      <i class="grip"></i>
      <button aria-label="Local cut stretch"><svg><use href="#t-h1"/></svg></button>
      <button aria-label="Full cut stretch"><svg><use href="#t-h2"/></svg></button>
      <button aria-label="Local stretch"><svg><use href="#hist"/></svg></button>
      <button aria-label="Full stretch"><svg><use href="#t-h4"/></svg></button>
      <button aria-label="Brighter"><svg><use href="#t-s1"/></svg></button>
      <button aria-label="Darker"><svg><use href="#t-s2"/></svg></button>
      <button aria-label="More contrast"><svg><use href="#t-m1"/></svg></button>
      <button aria-label="Less contrast"><svg><use href="#t-m2"/></svg></button>
      <button aria-label="Georeferencer"><svg><use href="#t-grid"/></svg></button>
      <button aria-label="Heatmap"><svg><use href="#t-spots"/></svg></button>
      <button aria-label="Interpolation"><svg><use href="#t-dark"/></svg></button>
      <button aria-label="Zonal statistics"><svg><use href="#t-sigma"/></svg></button>
      <span class="push"></span>
      <i class="grip"></i>
      <button aria-label="Split"><svg><use href="#t-b1"/></svg></button><i class="caret dim"></i>
      <button aria-label="Reshape"><svg><use href="#t-b2"/></svg></button>
      <button aria-label="Add ring"><svg><use href="#t-b3"/></svg></button><i class="caret dim"></i>
      <span class="more">»</span>
    </div>

    <div class="workspace">
      <aside class="dock">
        <i class="hgrip"></i>
        <div class="dock-tools">
          <button aria-label="Add vector layer"><svg><use href="#l-vector"/></svg></button>
          <button aria-label="Add raster layer"><svg><use href="#l-raster"/></svg></button>
          <button aria-label="Add PostGIS layer"><svg><use href="#l-pg"/></svg></button>
          <button aria-label="Add SpatiaLite layer"><svg><use href="#l-lite"/></svg></button>
          <button aria-label="Add MSSQL layer"><svg><use href="#l-ms"/></svg></button>
          <button aria-label="Add Oracle layer"><svg><use href="#l-ora"/></svg></button>
          <button aria-label="Add GeoRaster layer"><svg><use href="#l-geo"/></svg></button>
          <button aria-label="Add SQL Anywhere layer"><svg><use href="#l-bolt"/></svg></button>
          <button aria-label="Add WMS layer"><svg><use href="#l-wms"/></svg></button>
          <button aria-label="Add WCS layer"><svg><use href="#l-wcs"/></svg></button>
          <button aria-label="Add WFS layer"><svg><use href="#l-wfs"/></svg></button>
          <button aria-label="Add delimited text layer"><svg><use href="#l-comma"/></svg></button>
          <button class="with-caret" aria-label="New layer"><svg><use href="#l-newvec"/></svg><i class="caret"></i></button>
        </div>
        <svg class="chev" viewBox="0 0 12 14"><path d="M2 1l4 4 4-4M2 8l4 4 4-4"/></svg>
        <i class="hgrip"></i>
        <button class="cross" aria-label="Capture coordinate"><svg><use href="#cross"/></svg></button>
        <svg class="chev last" viewBox="0 0 12 14"><path d="M2 1l4 4 4-4M2 8l4 4 4-4"/></svg>
      </aside>
      <div class="panels">
        <i class="hgrip"></i>
        <div class="tree">
          <div class="tree-row"><span class="expander"></span><input class="tick small" type="checkbox" checked aria-label="Show districts"><svg><use href="#blob"/></svg><b>K</b></div>
          <div class="tree-row swatch-row"><span class="swatch"></span></div>
          <div class="tree-row picked"><input class="tick small" type="checkbox" aria-label="Show raster"><svg><use href="#checker"/></svg><b>K</b></div>
        </div>
        <i class="hgrip"></i>
        <div class="order">
          <label><input class="tick small" type="checkbox" checked>Karnataka</label>
          <label><input class="tick small" type="checkbox">Karnataka</label>
        </div>
        <label class="control"><input class="tick small" type="checkbox">Control ren</label>
      </div>
      <div class="canvas">
        <svg class="map" viewBox="0 22 1320 1546" preserveAspectRatio="none" role="img" aria-label="Map of Karnataka districts">
          <filter id="rough" x="-5%" y="-5%" width="110%" height="110%"><feTurbulence type="turbulence" baseFrequency=".11" numOctaves="2" seed="4"/><feDisplacementMap in="SourceGraphic" scale="7" xChannelSelector="R" yChannelSelector="G"/></filter>
          <g filter="url(#rough)">
            <g class="land">
              <path d="M945 58L925 62 905 78 902 97 880 108 838 115 832 125 843 134 827 148 828 168 797 176 780 174 785 187 775 214 768 228 758 212 735 202 725 212 700 238 675 243 680 262 674 272 687 284 688 298 655 292 608 292 600 298 560 296 540 284 530 290 495 282 483 268 480 282 470 286 484 300 490 316 486 330 497 348 494 374 477 370 458 382 438 372 418 374 412 384 390 376 385 392 360 402 335 382 288 378 295 392 282 400 292 410 240 420 205 432 208 450 190 444 162 438 155 450 130 462 110 452 125 472 122 484 136 486 124 504 155 508 170 522 165 545 134 556 155 558 134 572 142 588 130 608 98 620 88 612 62 634 98 636 88 660 98 678 108 700 98 706 118 714 102 738 115 742 106 772 78 790 68 798 88 806 80 824 104 838 124 842 130 870 148 890 165 930 185 990 210 1020 225 1070 233 1130 250 1190 264 1235 285 1272 320 1266 335 1290 360 1285 390 1308 398 1320 412 1334 418 1350 435 1370 470 1400 520 1420 545 1438 605 1445 608 1464 640 1470 670 1488 690 1490 686 1502 720 1500 728 1515 800 1517 806 1495 825 1480 865 1482 900 1478 955 1480 965 1445 1020 1440 1040 1415 1025 1398 970 1396 965 1382 990 1372 1000 1335 985 1320 992 1294 1035 1288 1048 1255 1075 1250 1100 1256 1130 1260 1140 1245 1165 1240 1170 1225 1192 1232 1182 1218 1200 1190 1215 1180 1220 1150 1190 1142 1172 1128 1172 1088 1130 1085 1118 1070 1098 1065 1095 1050 1104 1028 1068 1022 1065 1008 1030 1014 1030 1036 1005 1046 970 1050 945 1060 932 1054 934 1034 905 1026 885 1022 858 1016 856 1040 835 1038 812 1048 814 1022 806 1008 800 1004 805 978 785 966 803 950 800 928 784 914 805 895 780 888 760 868 758 838 778 800 780 790 758 788 762 768 790 774 838 776 856 758 858 722 840 706 826 688 808 676 825 672 832 630 850 640 832 600 860 584 905 580 952 580 950 530 952 514 975 500 935 494 905 490 885 470 915 462 936 448 940 425 935 410 942 395 940 350 947 328 920 318 930 292 948 270 960 256 1002 246 965 236 940 238 942 205 970 192 955 184 975 176 980 158 992 146 962 130 980 116 978 96 968 84 950 84Z"/>
              <path d="M803 950L820 950 850 938 848 926 890 928 912 938 915 965 890 988 850 988 825 972 832 962ZM915 928L932 932 944 945 940 958 918 955ZM905 992L922 996 920 1014 908 1008Z"/>
            </g>
            <path class="districts" d="M768 228L822 236 832 222 860 226 880 235 940 241M600 298L640 330 676 333 692 365 700 398 678 410 694 430 690 492 662 500 658 520 670 535 640 552M670 535L735 508 800 485 840 465 885 478 910 492 950 496M418 374L418 395 445 410 458 440 520 458 550 462 590 495 600 520 640 552 655 575 668 598M430 405L420 428 395 432 365 462 332 470 332 490 348 498 340 512 390 535 405 560 432 568 437 605 450 618 525 618 545 612 525 597 550 602 580 608 585 585 600 583 603 603 668 598 735 630 795 665 832 632M437 605L405 625 405 655 445 652 445 680 438 700 438 760 428 790M405 655L340 660 290 665 275 690 268 695 255 715 225 718 185 705 165 688 105 682M275 690L285 720 303 742 287 770 305 790 348 785 368 778 410 780 428 790 470 800 508 806 550 795 562 775 575 770 560 745 560 710 540 698 555 675 560 645 590 645 592 630 545 612M575 770L660 752 690 725 720 715 760 695 795 690 800 665M348 785L345 810 348 840 337 872 385 885 400 903 425 930 460 942 475 952 492 938 505 915 535 900 538 872 505 838 508 806M538 872L575 893 605 898 612 860 665 862 690 880 720 888 745 868 758 838M720 888L715 908 655 930 635 965 620 1000 592 1030 598 1005 585 980 592 962 560 955 545 938 492 938M337 872L330 900 305 905 325 940 310 962 262 965 235 980 242 1015 235 1025 210 1025M242 1015L300 1040 325 1080 340 1115 357 1128 342 1155 375 1197 340 1205 264 1205M357 1128L380 1100 420 1090 432 1075 488 1065 590 1035 640 1075 675 1108 630 1125 585 1160 525 1175 512 1222 470 1238 440 1205 410 1190 375 1197M675 1108L740 1070 775 1050 790 1020 812 1010M675 1108L692 1130 670 1160 690 1190 710 1210 750 1217 800 1235 825 1262 858 1272 875 1270 870 1230 848 1222 865 1195 895 1160 925 1155 935 1120 935 1060M935 1120L985 1135 1045 1160 1088 1175 1088 1200 1072 1215 1050 1252 1035 1220 1010 1195 970 1185 935 1195 940 1215 922 1240 945 1282 985 1278 990 1294M470 1238L492 1285 548 1288 552 1258 572 1270 568 1305 605 1322 635 1302 668 1305 670 1260 708 1265 750 1217M492 1285L490 1320 415 1334M568 1305L560 1350 590 1380 618 1420 608 1445M668 1305L700 1340 770 1370 820 1348 845 1385 838 1425 800 1445 740 1465 690 1485M858 1272L872 1335 915 1345 920 1375 880 1378 845 1405M920 1375L965 1382"/>
          </g>
        </svg>
      </div>
    </div>

    <div class="statusbar">
      <button class="cell" aria-label="Toggle extents"><svg viewBox="0 0 20 24"><path d="M5 4q8-4 10 4 3 10-3 13-6-1-8-8-2-6 1-9z" fill="#ddd" stroke="#222" stroke-width="2"/><path d="M3 4l12 14M3 12L15 3" stroke="#222" stroke-width="2"/></svg></button>
      <label class="cell" for="coord">Coordinate:</label>
      <input class="cell coord" id="coord" value="-526,-20">
      <label class="cell" for="scale">Scale</label>
      <div class="cell scale"><input id="scale" value=":995571995"><i class="caret"></i></div>
      <button class="cell" aria-label="Stop rendering"><svg viewBox="0 0 20 24"><path d="M18 2L9 17l-5 6 8-3 7-16z" fill="#777"/><circle cx="7" cy="7" r="5" fill="#fff" stroke="#d5363c" stroke-width="2"/><path d="M4 10l6-6" stroke="#d5363c" stroke-width="2"/></svg></button>
      <label class="cell render"><input class="tick small" type="checkbox" checked>Render</label>
      <span class="cell epsg">EPSG:4326</span>
      <button class="cell" aria-label="CRS status"><svg viewBox="0 0 20 24"><circle cx="10" cy="12" r="8" fill="#bbb" stroke="#777" stroke-width="2"/><circle cx="10" cy="12" r="4" fill="#eee" stroke="#777"/><path d="M10 2v6M10 16v6M1 12h5M14 12h5" stroke="#777" stroke-width="2"/></svg></button>
      <button class="cell" aria-label="Messages"><svg viewBox="0 0 20 24"><path d="M10 4l8 16H2z" fill="#f4f4a0" stroke="#888" stroke-width="1.500"/><path d="M10 9v6M10 16.500v2" stroke="#333" stroke-width="2"/></svg></button>
    </div>

    <footer class="taskbar">
      <button aria-label="Start"><svg viewBox="0 0 24 24"><path fill="#fff" d="M1 4l9-1.500V11H1zM11.500 2.200L23 1v10H11.500zM1 12.500h9V21l-9-1.500zM11.500 12.500H23v10l-11.500-1.300z"/></svg></button>
      <button aria-label="Task view"><svg viewBox="0 0 26 24"><path d="M6 4h14v16H6zM3 5H1v14h2M23 5h2v14h-2" fill="none" stroke="#fff" stroke-width="1.600"/></svg></button>
      <button aria-label="Settings"><svg viewBox="0 0 24 24"><circle cx="12" cy="12" r="9" fill="none" stroke="#fff" stroke-width="4" stroke-dasharray="4 3"/><circle cx="12" cy="12" r="6" fill="none" stroke="#fff" stroke-width="3"/></svg></button>
      <button aria-label="Mail"><svg viewBox="0 0 26 26"><path fill="#3f9ee0" d="M0 2h26v19H0z"/></svg></button>
      <button aria-label="Store"><svg viewBox="0 0 26 26"><path fill="#b8c0c8" d="M2 12l12-6 11 12-8 6z"/></svg></button>
      <button class="running" aria-label="Files"><svg viewBox="0 0 30 26"><use href="#folder"/></svg></button>
      <button class="running" aria-label="Chat"><svg viewBox="0 0 30 30"><path fill="#1fae54" d="M0 0h30v30H0z"/><circle cx="15" cy="16" r="8" fill="none" stroke="#fff" stroke-width="2"/></svg></button>
      <button aria-label="Camera"><svg viewBox="0 0 30 30"><rect width="30" height="30" rx="4" fill="#0a0a0a"/><circle cx="15" cy="15" r="8" fill="none" stroke="#2b6a86" stroke-width="2"/></svg></button>
      <button class="running" aria-label="Chrome"><svg viewBox="0 0 30 30"><path fill="#e04a3a" d="M15 15L3 6a14 14 0 0 1 25 3H15z"/><path fill="#4aa654" d="M15 15l-3 13A14 14 0 0 1 3 6l7 10z"/><path fill="#f4c83a" d="M15 15l13-6a14 14 0 0 1-16 19l6-9z"/><circle cx="15" cy="15" r="6" fill="#fff"/><circle cx="15" cy="15" r="4.500" fill="#4a86d8"/><path fill="#c0392b" d="M17 19h12v9H17z"/></svg></button>
      <button class="running" aria-label="Word"><svg viewBox="0 0 30 28"><path fill="#fff" d="M14 4h14v20H14z"/><path d="M18 8h8M18 12h8M18 16h8M18 20h8" stroke="#2b5797" stroke-width="1.500"/><path fill="#2b5fb0" d="M1 4l17-3v26L1 24z"/><text x="9.500" y="19" font-size="14" font-weight="700" text-anchor="middle" fill="#fff">W</text></svg></button>
      <button class="running" aria-label="File explorer"><svg viewBox="0 0 30 26"><use href="#folder"/></svg></button>
      <button class="running current" aria-label="QGIS"><svg viewBox="0 0 30 30"><circle cx="14" cy="14" r="9" fill="none" stroke="#d9ec3a" stroke-width="6"/><path d="M15 15l11 12" stroke="#8fc31f" stroke-width="5"/></svg></button>
      <div class="tray">
        <span class="desk">Desktop</span><span class="up">»</span>
        <svg class="w32" viewBox="0 0 30 30"><circle cx="15" cy="15" r="13" fill="#1e9be0" stroke="#fff" stroke-width="2.500"/><text x="15" y="22" font-size="20" font-weight="700" text-anchor="middle" fill="#fff">?</text></svg>
        <svg viewBox="0 0 22 22"><path d="M4 14l7-8 7 8"/></svg>
        <svg viewBox="0 0 22 22"><path d="M8 7h12v9H8zM2 4v4q3 4 6 0V4M5 10v6h3"/><path d="M10 9h4v5h-4z" fill="#fff"/></svg>
        <svg viewBox="0 0 22 22"><path d="M4 19Q4 5 19 4M8 19Q8 9 19 8M12 19q0-6 7-7M16 19q0-3 3-3"/></svg>
        <svg viewBox="0 0 22 22"><path d="M2 8h4l5-4v14l-5-4H2zM14 8q2 3 0 6M17 5q4 6 0 12"/></svg>
        <svg viewBox="0 0 22 22"><path d="M2 17q2-7 6-4 3 6-4 6M9 15L16 2q3 0 2 3l-7 12M12 10q6-2 8 0"/></svg>
        <time><span>4:01 PM</span><span>10/29/2017</span></time>
        <svg viewBox="0 0 22 22"><path d="M2 3h18v13h-7v4l-4-4H2z"/></svg>
      </div>
    </footer>
  </section>

  <ul class="doc-text steps"><li><span>Browse the .csv file in the tab appearing after the above step.</span></li></ul>

  <section class="dialog" aria-label="Create a Layer from a Delimited Text File">
    <header class="dialog-title">
      <svg class="logo"><use href="#qgis"/></svg>
      <h2>Create a Layer from a Delimited Text File</h2>
      <button aria-label="Help">?</button>
      <button aria-label="Close"><svg viewBox="0 0 28 28"><path d="M1 1l26 26M27 1L1 27"/></svg></button>
    </header>
    <form class="form">
      <div class="row file">
        <label for="file">File Name</label><input class="text" id="file" value="C:/Users/Kamlesh.KAMLESH/Desktop/K/kk/Forest cover.csv">
        <button type="button" class="btn">Browse...</button>
      </div>
      <div class="row layer">
        <label for="lname">Layer name</label><input class="text" id="lname" value="Forest cover">
        <label class="enc" for="enc">Encoding</label>
        <div class="combo"><select id="enc"><option>UTF-8</option></select><span><i class="caret"></i></span></div>
      </div>
      <div class="row thirds format">
        <span>File format</span>
        <label><input class="dot" type="radio" name="fmt" checked>CSV (comma separated values)</label>
        <label><input class="dot" type="radio" name="fmt">Custom delimiters</label>
        <label><input class="dot" type="radio" name="fmt">Regular expression delimiter</label>
      </div>
      <div class="row record">
        <span class="name">Record options</span>
        <label for="skip">Number of header lines to discard</label>
        <div class="spin"><input id="skip" value="0"><span><button type="button" aria-label="More"><i class="caret flip"></i></button><button type="button" aria-label="Less"><i class="caret"></i></button></span></div>
        <label><input class="tick" type="checkbox" checked>First record has field names</label>
      </div>
      <div class="row fields">
        <span class="name">Field options</span>
        <label><input class="tick" type="checkbox">Trim fields</label>
        <label><input class="tick" type="checkbox">Discard empty fields</label>
        <label><input class="tick" type="checkbox">Decimal separator is comma</label>
      </div>
      <div class="row thirds geometry">
        <span>Geometry definition</span>
        <label><input class="dot" type="radio" name="geo">Point coordinates</label>
        <label><input class="dot" type="radio" name="geo">Well known text (WKT)</label>
        <label><input class="dot" type="radio" name="geo" checked>No geometry (attribute only table)</label>
      </div>
      <div class="row thirds settings">
        <span>Layer settings</span>
        <label class="muted"><input class="tick" type="checkbox" disabled>Use spatial index</label>
        <label><input class="tick" type="checkbox">Use subset index</label>
        <label class="watch"><span class="ghost">Window Snip</span><input class="tick" type="checkbox"><span class="front">Watch file</span></label>
      </div>
      <div class="sample">
        <table>
          <colgroup><col class="c-no"><col class="c-name"><col><col></colgroup>
          <thead><tr><th></th><th>DISTRICT</th><th>FOREST COVER (2001) sq. km</th><th>FOREST COVER (2011) sq. km</th></tr></thead>
          <tbody>
            <tr><th>1</th><td>Shimoga</td><td>4476</td><td>4407</td></tr>
            <tr><th>2</th><td>Bellary</td><td>895</td><td>772</td></tr>
            <tr><th>3</th><td>Uttar Kannad</td><td>7842</td><td>7819</td></tr>
            <tr><th>4</th><td>Belgaum</td><td>1112</td><td>1094</td></tr>
            <tr><th>5</th><td>Gulbarga</td><td>330</td><td>296</td></tr>
            <tr><th>6</th><td>Bidar</td><td>62</td><td>54</td></tr>
            <tr><th></th><td></td><td></td><td></td></tr>
          </tbody>
        </table>
        <div class="scroll">
          <button type="button" aria-label="Scroll up"><i class="caret flip"></i></button>
          <div class="track"><div class="thumb"></div></div>
          <button type="button" aria-label="Page up"><i class="caret flip"></i></button>
          <button type="button" aria-label="Scroll down"><i class="caret"></i></button>
        </div>
      </div>
      <div class="actions">
        <button type="button" class="btn default">OK</button>
        <button type="button" class="btn">Cancel</button>
        <button type="button" class="btn">Help</button>
      </div>
    </form>
  </section>
</main>
</body>
</html>
```
FILE: styles.css
```css
* { box-sizing: border-box; }

:root {
  --ui: "DejaVu Sans Condensed", "Noto Sans", sans-serif;
  --win: "Open Sans", "Noto Sans", sans-serif;
  --face: #f0eff0;
}

body { margin: 0; background: #fff; color: #000; }
button, input, select { font: inherit; color: inherit; margin: 0; }
button { border: 0; padding: 0; background: none; }
.sprite { position: absolute; width: 0; height: 0; }
svg { display: block; flex: none; }

.sheet {
  margin: 82px;
  border: 6px double #000;
  padding: 82px 36px 64px 86px;
}

/* document text */
.doc-text { margin: 0; font: 41px/48px "Liberation Serif", serif; }
h1.doc-text { font-weight: 700; }
.steps { list-style: none; padding: 35px 0 29px 187px; }
.steps li { display: flex; align-items: center; gap: 45px; height: 48px; }
.steps li::before { content: ""; width: 15px; height: 15px; border-radius: 50%; background: #000; }
.to { font-size: 46px; line-height: 40px; }

/* shared bits */
.caret { display: block; width: 0; height: 0; border: 6px solid transparent; border-top: 8px solid #000; border-bottom: 0; }
.caret.dim { border-top-color: #8a8a8a; }
.caret.flip { border-top: 0; border-bottom: 8px solid #000; }
.off { filter: grayscale(1); opacity: .6; }
.tick {
  appearance: none; flex: none; width: 33px; height: 33px;
  display: grid; place-items: center;
  border: 2px solid #c6c6c6; background: #fcfcfc; border-radius: 2px;
}
.tick:checked::before { content: "✖"; font: 28px/28px "DejaVu Sans", sans-serif; color: #000; }
.tick:disabled { border-color: #a0a0a0; background: #e6e5e6; }
.tick.small { width: 16px; height: 16px; border: 1px solid #b5b5b5; }
.tick.small:checked::before { font-size: 15px; line-height: 14px; }

/* QGIS window */
.qgis { position: relative; background: var(--face); font: 14px/20px var(--ui); color: #111; }
.titlebar { display: flex; align-items: center; height: 30px; padding-left: 4px; background: #8b8b8b; font-family: var(--win); }
.titlebar .logo { width: 16px; height: 20px; }
.titlebar .title { flex: 1; padding-left: 9px; }
.titlebar button { width: 58px; display: grid; place-items: center; }
.titlebar button svg { width: 16px; height: 16px; fill: none; stroke: #111; stroke-width: 1.5; }

.menubar { display: flex; height: 28px; align-items: center; padding-left: 3px; }
.menubar > button { height: 20px; padding: 0 9px; }
.menu-host { position: relative; }
.menu-host > .open { display: block; height: 20px; margin: 0 3px; padding: 0 6px; background: #d9d9d9; outline: 1px solid #999; }
.menu {
  position: absolute; z-index: 5; left: 3px; top: 22px; width: 335px;
  padding: 1px 0; background: #f8f8f8; border: 1px solid #999; border-right-width: 2px;
}
.menu button {
  display: grid; grid-template-columns: 20px 1fr 102px; column-gap: 8px; align-items: center;
  width: 100%; height: 27px; padding-left: 2px; text-align: left; white-space: nowrap;
}
.menu button.short { height: 24px; }
.menu button svg { width: 20px; height: 20px; }
.menu button span { grid-column: 2; min-width: 0; }
.menu kbd { font: inherit; grid-column: 3; }
.menu .sub { font-size: 10px; justify-self: end; padding-right: 12px; }
.menu button:disabled { color: #858585; }
.menu .active { background: #0073cf; color: #fff; }
.menu .spaced { margin-top: 1px; }
.menu hr { height: 1px; margin: 0 6px 2px; border: 0; background: #b0b0b0; }

.toolbar { display: flex; align-items: center; height: 50px; border-top: 2px solid #c3c2c3; box-shadow: inset 0 1px #fafafa; }
.toolbar:nth-of-type(3) { height: 48px; }
.toolbar button { flex: none; width: 45px; display: grid; place-items: center; }
.toolbar button svg { width: 32px; height: 32px; }
.toolbar .caret { flex: none; margin: 0 2px; }
.grip { flex: none; width: 17px; height: 38px; background: radial-gradient(circle at 2px 2px, #c8c8c8 1px, transparent 2px) 0 0 / 5px 6px, radial-gradient(circle at 2px 2px, #fff 1px, transparent 2px) 2px 3px / 5px 6px; background-clip: content-box; padding-left: 8px; }
.grip.first { width: 13px; padding-left: 4px; }
.covered { flex: none; width: 314px; }
.covered.wide { width: 332px; }
.push { flex: 1; }
.more { width: 44px; padding-right: 4px; text-align: right; font-weight: 700; font-size: 18px; }

.workspace { display: flex; min-height: 694px; border-top: 2px solid #b5b5b5; }
.hgrip { display: block; flex: none; height: 8px; background: radial-gradient(circle at 2px 2px, #c8c8c8 1px, transparent 2px) 0 0 / 6px 5px; }
.dock { display: flex; flex-direction: column; align-items: center; width: 66px; padding: 7px 6px 0; border-right: 1px solid #b5b5b5; }
.dock .hgrip { width: 100%; }
.dock-tools { flex: 1; display: flex; flex-direction: column; width: 100%; }
.dock-tools button { flex: 1; display: flex; align-items: center; justify-content: center; }
.dock-tools svg, .cross svg { width: 32px; height: 32px; }
.dock-tools .with-caret { gap: 6px; }
.chev { width: 12px; height: 14px; margin: 12px 0 11px; fill: none; stroke: #111; stroke-width: 2; }
.chev.last { margin: 7px 0 5px; }
.cross { margin: 6px 0 0; }
/* the docked panels are clipped where the open menu begins */
.panels { display: flex; flex-direction: column; width: 93px; margin-right: 327px; padding-left: 1px; overflow: hidden; white-space: nowrap; }
.panels > .hgrip { margin: 7px 0 13px; }
.tree { height: 288px; border: 2px solid #2087dc; border-right: 0; background: #fff; overflow: hidden; }
.tree-row { display: flex; align-items: center; gap: 8px; height: 21px; padding-left: 6px; }
.tree-row svg { width: 22px; height: 20px; }
.tree-row svg + b { margin-left: -2px; }
.expander { flex: none; width: 12px; height: 12px; margin-right: 4px; border: 1px solid #999; background: linear-gradient(#555, #555) center / 6px 1px no-repeat; }
.swatch-row { height: 20px; padding-left: 55px; }
.swatch { width: 19px; height: 19px; background: #1653df; border: 1px solid #76823a; }
.picked { background: #0073cf; color: #fff; padding-left: 30px; }
.picked svg { opacity: .5; }
.panels > .tree + .hgrip { margin: 16px 0 12px; }
.order { flex: 1; border: 2px solid #a8a8a8; border-right: 0; color: #888; padding: 1px 4px; overflow: hidden; }
.order label { display: flex; align-items: center; gap: 7px; height: 17px; }
.order .tick { color: #666; background: #f6f6f6; }
.order .tick::before { opacity: .6; }
.control { display: flex; align-items: center; gap: 6px; height: 30px; padding-top: 5px; }
.canvas { flex: 1; min-width: 0; margin: 0 2px 2px 0; padding-left: 200px; background: #fff; border-bottom: 1px solid #b5b5b5; }
.map { width: 440px; height: 631px; }
.land { fill: #1555e0; stroke: #5d8740; stroke-width: 4; }
.districts { fill: none; stroke: #6f9560; stroke-width: 4; }

.statusbar { display: flex; justify-content: flex-end; gap: 3px; height: 33px; padding: 2px 0 3px; border-bottom: 1px solid #cfe6f5; }
.cell { display: grid; place-items: center; height: 28px; padding: 0 6px; border: 2px solid #b5b4b5; border-radius: 2px; background: #f3f2f3; white-space: nowrap; }
button.cell { width: 30px; padding: 0; }
button.cell svg { width: 20px; height: 24px; }
.coord { width: 389px; background: #fff; text-align: center; }
.scale { display: flex; align-items: center; width: 109px; padding: 0; }
.scale input { min-width: 0; flex: 1; height: 24px; border: 0; padding: 0 2px; }
.scale .caret { margin: 0 6px; border-width: 8px 5px 0; }
.render { display: flex; align-items: center; gap: 6px; padding: 0 8px 0 2px; }
.epsg { color: #9a9a9a; padding: 0 3px; }

.taskbar { display: flex; height: 52px; background: linear-gradient(90deg, #04233a, #0a3049 60%, #06273e); color: #e8eef2; font: 14px/22px var(--win); }
.taskbar > button { width: 63px; display: grid; place-items: center; }
.taskbar > button svg { width: 26px; height: 28px; }
.taskbar > .running { background: linear-gradient(#8fc3ea, #8fc3ea) bottom / 51px 2px no-repeat; }
.taskbar > .current { background: #2f6287; }
.tray { margin-left: auto; display: flex; align-items: center; gap: 7px; padding-right: 29px; }
.tray svg { width: 24px; height: 24px; fill: none; stroke: #fff; stroke-width: 1.5; }
.tray .w32 { width: 30px; height: 30px; stroke: none; margin-right: 4px; }
.tray .up { align-self: flex-start; font-size: 18px; margin: 0 5px 0 6px; }
.tray time { display: flex; flex-direction: column; text-align: center; margin: 0 10px; }

/* delimited text dialog */
.dialog { margin-right: 27px; border: 2px solid #a9a9a9; background: var(--face); font: 27px/36px var(--ui); color: #222; }
.dialog-title { display: flex; align-items: center; height: 79px; padding: 0 47px 0 24px; background: #fff; color: #a2a2a2; font-family: var(--win); }
.dialog-title .logo { width: 34px; height: 38px; opacity: .9; }
.dialog-title h2 { flex: 1; margin: 0 0 0 18px; font: inherit; font-size: 29px; }
.dialog-title button { width: 28px; margin-left: 89px; }
.dialog-title button svg { width: 28px; height: 28px; fill: none; stroke: #999; stroke-width: 2; }
.form { padding: 28px 30px 28px 26px; }
.row { display: flex; align-items: center; min-height: 36px; white-space: nowrap; }
.row label:has(input) { display: flex; align-items: center; gap: 12px; }
.row .name { flex: none; width: 261px; }
.text { flex: 1; min-width: 0; height: 51px; padding: 2px 9px 0; border: 2px solid #bcbcbc; border-radius: 5px; background: #fff; }
.btn { width: 193px; height: 60px; border: 2px solid #c0c0c0; border-radius: 5px; background: linear-gradient(#fbfbfb, #e0dfe0); }
.btn.default { border-color: #7d7d7d; }
.file { gap: 17px; }
.file .btn { height: 58px; }
.layer { gap: 17px; margin-top: 17px; }
.enc { margin-left: -4px; }
.combo { display: flex; width: 313px; height: 51px; border: 2px solid #bcbcbc; border-radius: 5px; background: linear-gradient(#f6f6f6, #e2e1e2); }
.combo select { appearance: none; flex: 1; border: 0; padding: 0 8px; background: none; }
.combo span { display: grid; place-items: center; width: 41px; border-left: 2px solid #c0c0c0; }
.form .caret { border-width: 11px 9px 0; }
.form .caret.flip { border-width: 0 9px 11px; }
.dot { appearance: none; flex: none; width: 31px; height: 31px; display: grid; place-items: center; border: 3px solid #cfcfcf; border-radius: 50%; background: #fcfcfc; }
.dot:checked::before { content: ""; width: 19px; height: 19px; border-radius: 50%; background: #000; }
.thirds { display: grid; grid-template-columns: 261px 473fr 475fr 454fr; }
.format { margin-top: 24px; }
.format label, .geometry label { gap: 16px; }
.record { margin-top: 150px; }
.spin { display: flex; width: 124px; height: 48px; margin: 0 17px 0 19px; border: 2px solid #bcbcbc; border-radius: 5px; overflow: hidden; background: #fff; }
.spin input { flex: 1; min-width: 0; border: 0; padding: 0 8px; }
.spin span { display: grid; width: 41px; }
.spin button { display: grid; place-items: center; border-left: 2px solid #c4c4c4; background: var(--face); }
.spin button + button { border-top: 2px solid #c4c4c4; }
.spin .caret { border-width: 9px 9px 0; }
.spin .caret.flip { border-width: 0 9px 9px; }
.fields { margin-top: 20px; }
.fields label { margin-right: 30px; }
.geometry { margin-top: 30px; grid-template-columns: 261px 460fr 457fr 485fr; }
.settings { margin-top: 92px; }
.muted { color: #999; }
.watch { position: relative; }
.watch .tick, .front { position: relative; }
.ghost { position: absolute; left: -123px; top: -34px; width: 442px; height: 60px; padding: 8px 0 0 82px; background: #e7eef2; color: #d7dfe4; }

.sample {
  display: flex; justify-content: space-between; height: 397px; margin: 20px 0 0 2px; overflow: hidden;
  border: 3px solid #c2c1c2; border-top-width: 5px; border-radius: 6px;
  background: linear-gradient(#efeeef 55px, #fff 55px);
}
.sample table { width: 1118px; border-spacing: 0; table-layout: fixed; }
.c-no { width: 58px; }
.c-name { width: 183px; }
.sample th, .sample td { height: 54px; padding: 3px 8px 0; border: solid #a3a3a3; border-width: 0 2px 2px 0; text-align: left; font-weight: 400; white-space: nowrap; }
.sample td { background: #fff; }
.sample th { border-color: #8e8e8e; background: linear-gradient(#fbfbfb, #e6e5e6); text-align: center; }
.sample thead th { height: 55px; }
.sample tbody th { text-align: left; padding-left: 14px; border-bottom-width: 3px; }
.scroll { display: flex; flex-direction: column; width: 42px; background: #f1f0f1; }
.scroll button { display: grid; place-items: center; height: 40px; border: 2px solid #8e8e8e; border-radius: 5px; background: linear-gradient(#fbfbfb, #dedede); }
.track { flex: 1; border: dotted #ccc; border-width: 0 2px; }
.thumb { height: 66px; margin: 0 -2px; border: 2px solid #8e8e8e; background: linear-gradient(90deg, #fff, #e0dfe0); }
.actions { display: flex; justify-content: flex-end; gap: 26px; margin-top: 65px; }
```
